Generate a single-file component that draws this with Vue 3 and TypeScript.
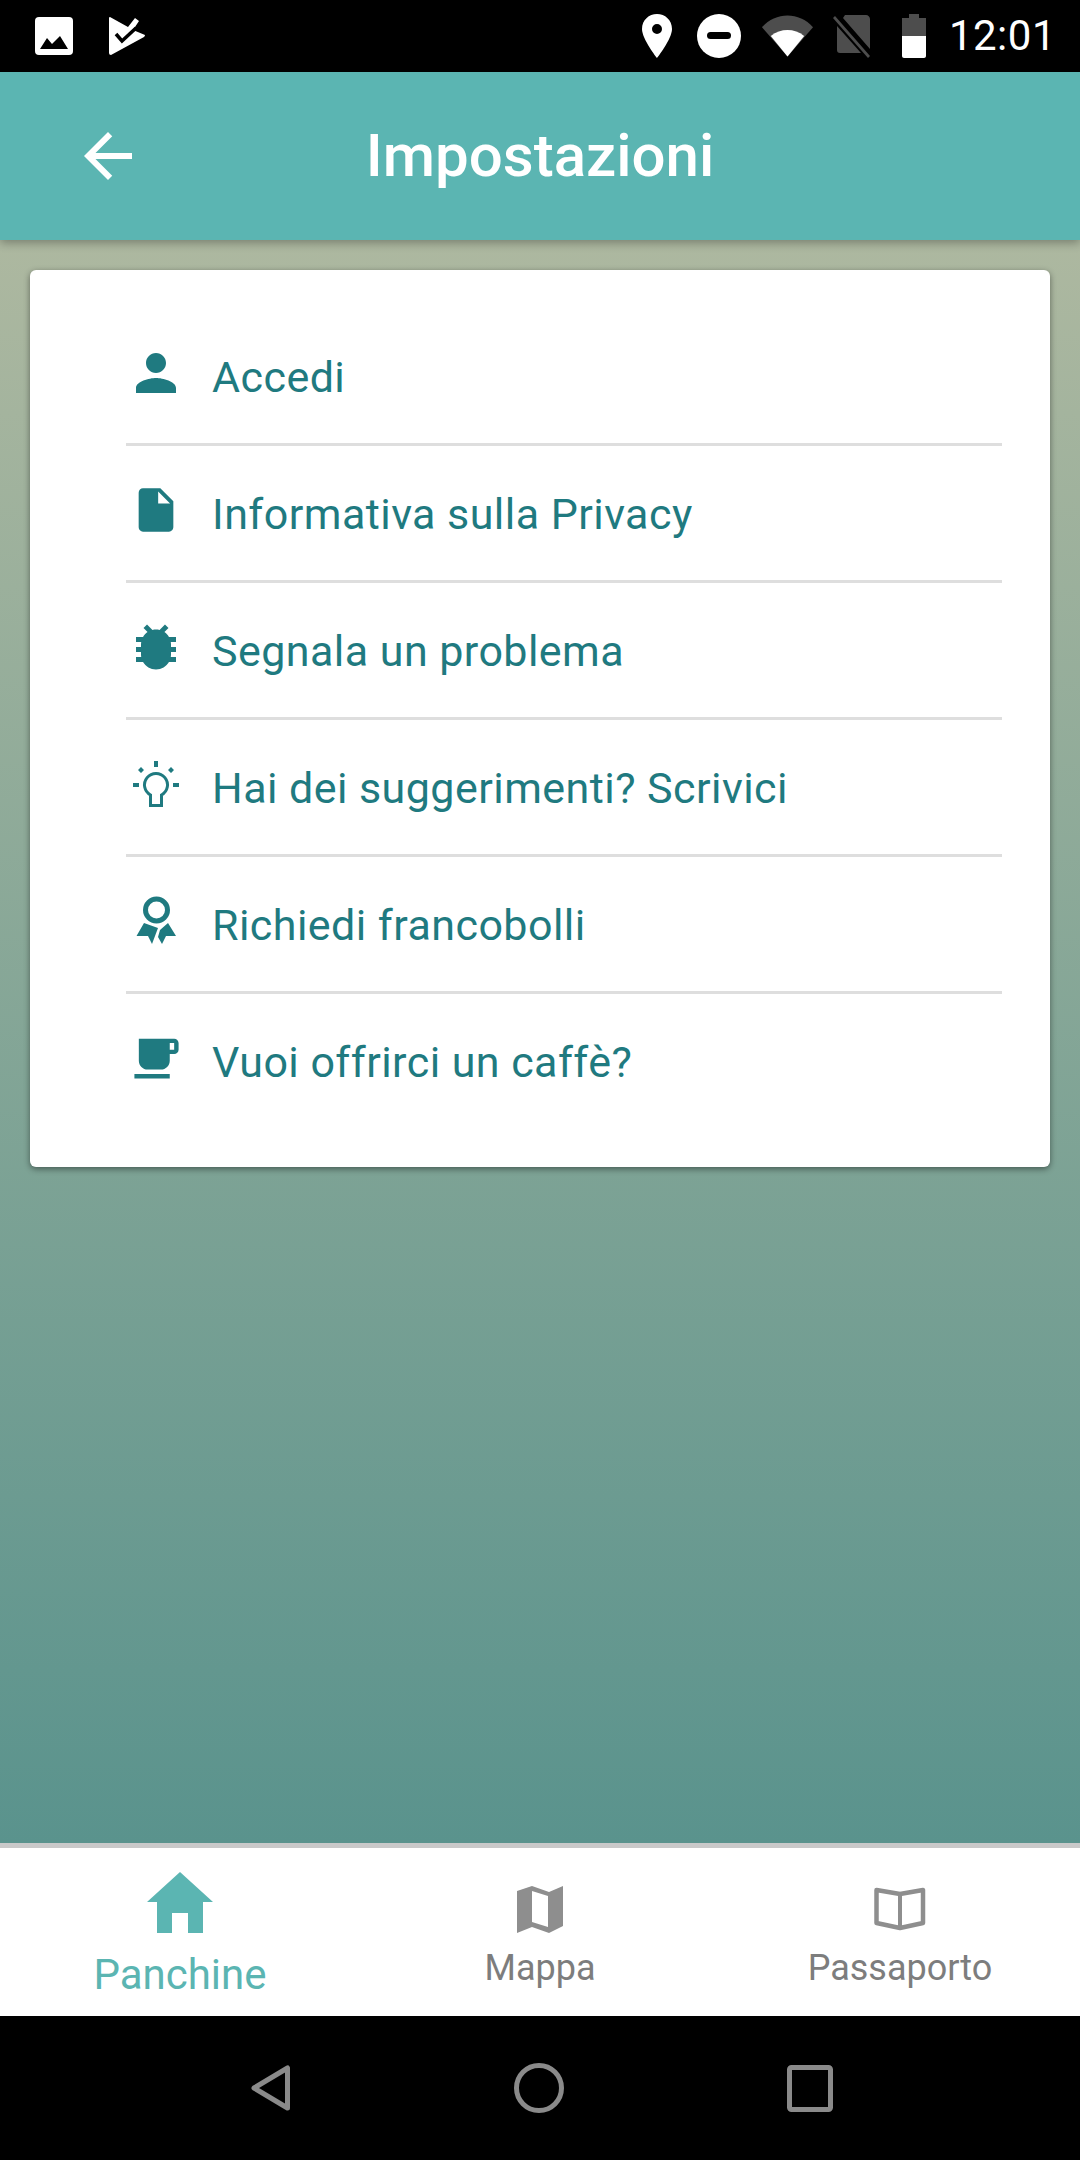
<script setup lang="ts">
interface SettingsRow {
  label: string
  icon: 'person' | 'file' | 'bug' | 'bulb' | 'medal' | 'cup'
}

const rows: SettingsRow[] = [
  { label: 'Accedi', icon: 'person' },
  { label: 'Informativa sulla Privacy', icon: 'file' },
  { label: 'Segnala un problema', icon: 'bug' },
  { label: 'Hai dei suggerimenti? Scrivici', icon: 'bulb' },
  { label: 'Richiedi francobolli', icon: 'medal' },
  { label: 'Vuoi offrirci un caffè?', icon: 'cup' }
]
</script>

<template>
  <div class="phone">
    <!-- Android status bar -->
    <div class="status">
      <div class="status__left">
        <svg width="38" height="38" viewBox="0 0 38 38">
          <rect width="38" height="38" rx="4" fill="#fff" />
          <path d="M5 32l7-11 5 6 8-8 8 13z" fill="#000" />
        </svg>
        <svg class="status__play" width="36" height="38" viewBox="0 0 36 38">
          <path d="M0 1q0-1 1-1l18 10 7-9 4 3-6 9 12 5q0 1-1 2L2 38q-2 0-2-2z" fill="#fff" />
          <path d="M7 17l6 7 14-13" fill="none" stroke="#000" stroke-width="3.5" />
        </svg>
      </div>
      <div class="status__right">
        <svg width="30" height="44" viewBox="0 0 30 44">
          <path d="M15 0C7 0 0 6 0 15c0 10 15 29 15 29s15-19 15-29C30 6 23 0 15 0zm0 20a5 5 0 1 1 0-10 5 5 0 0 1 0 10z" fill="#fff" />
        </svg>
        <svg class="status__dnd" width="44" height="44" viewBox="0 0 44 44">
          <circle cx="22" cy="22" r="22" fill="#fff" />
          <rect x="10" y="18" width="24" height="7" rx="3.5" fill="#000" />
        </svg>
        <svg class="status__wifi" width="51" height="42" viewBox="0 0 52 42">
          <path d="M0 12C14-4 38-4 52 12L26 42z" fill="#4d4d4d" />
          <path d="M9 21c10-8 24-8 34 0L26 42z" fill="#fff" />
        </svg>
        <svg class="status__sim" width="38" height="44" viewBox="0 0 38 44">
          <path d="M12 1h21c2 0 4 2 4 4v30L10 4zM4 12l24 27H7c-2 0-3-1-3-3z" fill="#4d4d4d" />
          <path d="M0 4L2 2l35 40-2 2z" fill="#4d4d4d" />
        </svg>
        <svg class="status__battery" width="24" height="44" viewBox="0 0 24 44">
          <path d="M7 0h10v4h7v18H0V4h7z" fill="#4d4d4d" />
          <path d="M0 22h24v20c0 1-1 2-2 2H2c-1 0-2-1-2-2z" fill="#fff" />
        </svg>
        <span class="status__time">12:01</span>
      </div>
    </div>

    <!-- App bar -->
    <header class="appbar">
      <svg class="appbar__back" width="72" height="72" viewBox="0 0 24 24">
        <path d="M20 11H7.83l5.59-5.59L12 4l-8 8 8 8 1.41-1.41L7.83 13H20v-2z" fill="#fff" />
      </svg>
      <h1 class="appbar__title">Impostazioni</h1>
    </header>

    <!-- Settings list -->
    <main class="body">
      <section class="card">
        <div v-for="row in rows" :key="row.label" class="row">
          <span class="row__icon">
            <svg v-if="row.icon === 'person'" width="60" height="60" viewBox="0 0 24 24">
              <path d="M12 12c2.21 0 4-1.79 4-4s-1.79-4-4-4-4 1.79-4 4 1.79 4 4 4zm0 2c-2.67 0-8 1.34-8 4v2h16v-2c0-2.66-5.33-4-8-4z" />
            </svg>
            <svg v-else-if="row.icon === 'file'" width="52" height="52" viewBox="0 0 24 24">
              <path d="M6 2c-1.1 0-2 .9-2 2v16c0 1.1.9 2 2 2h12c1.1 0 2-.9 2-2V8l-6-6H6zm7 7V3.5L18.5 9H13z" />
            </svg>
            <svg v-else-if="row.icon === 'bug'" width="60" height="60" viewBox="0 0 24 24">
              <path d="M20 8h-2.81c-.45-.78-1.07-1.45-1.82-1.96L17 4.41 15.59 3l-2.17 2.17C12.96 5.06 12.49 5 12 5c-.49 0-.96.06-1.41.17L8.41 3 7 4.41l1.62 1.63C7.88 6.55 7.26 7.22 6.81 8H4v2h2.09c-.05.33-.09.66-.09 1v1H4v2h2v1c0 .34.04.67.09 1H4v2h2.81c1.04 1.79 2.97 3 5.19 3s4.15-1.21 5.19-3H20v-2h-2.09c.05-.33.09-.66.09-1v-1h2v-2h-2v-1c0-.34-.04-.67-.09-1H20V8z" />
            </svg>
            <svg v-else-if="row.icon === 'bulb'" width="60" height="60" viewBox="0 0 60 60">
              <path d="M24.5 41A11.5 11.5 0 1 1 35.5 41V51.5H24.5Z" fill="none" stroke="#1f7a80" stroke-width="3" />
              <path d="M28 7h4v6h-4zM7 29h6v4H7zM47 29h6v4h-6zM15 13l3 3-3 3-3-3zM45 13l3 3-3 3-3-3z" />
            </svg>
            <svg v-else-if="row.icon === 'medal'" width="60" height="60" viewBox="0 0 60 60">
              <circle cx="30.5" cy="19" r="11" fill="none" stroke="#1f7a80" stroke-width="5" />
              <path d="M18 32l14 5-6 16-4-8H10.500zM42 32l8 13H40l-4 8-4-7 2-7z" />
            </svg>
            <svg v-else width="53" height="53" viewBox="0 0 24 24">
              <path d="M20 3H4v10c0 2.21 1.79 4 4 4h6c2.21 0 4-1.79 4-4v-3h2c1.11 0 2-.9 2-2V5c0-1.11-.89-2-2-2zm0 5h-2V5h2v3zM2 21h16v-2H2v2z" />
            </svg>
          </span>
          <span class="row__label">{{ row.label }}</span>
        </div>
      </section>
    </main>

    <!-- Bottom tabs -->
    <nav class="tabs">
      <div class="tab tab--active">
        <svg width="66" height="61" viewBox="0 0 66 61">
          <path d="M33 0l33 30H56v31H41V41H25v20H10V30H0z" fill="#5bb5b2" />
        </svg>
        <span class="tab__label">Panchine</span>
      </div>
      <div class="tab">
        <svg width="63" height="63" viewBox="0 0 63 63">
          <path d="M8 13l15-5 17 6 14-6v40l-14 7-17-6-15 6zM23 13v31l16 5V18z" fill="#8e8e8e" fill-rule="evenodd" />
        </svg>
        <span class="tab__label">Mappa</span>
      </div>
      <div class="tab">
        <svg width="63" height="63" viewBox="0 0 63 63">
          <path d="M7.500 12L31 16l23-4v33l-23 5-23.500-5z" fill="none" stroke="#8e8e8e" stroke-width="4.500" stroke-linejoin="round" />
          <path d="M31 16v34" stroke="#8e8e8e" stroke-width="4" />
        </svg>
        <span class="tab__label">Passaporto</span>
      </div>
    </nav>

    <!-- Android navigation bar -->
    <div class="sysnav">
      <svg width="40" height="46" viewBox="0 0 40 46">
        <path d="M36.500 3v40L3 23z" fill="none" stroke="#8a8a8a" stroke-width="5" stroke-linejoin="round" />
      </svg>
      <svg width="50" height="50" viewBox="0 0 50 50">
        <circle cx="25" cy="25" r="22.500" fill="none" stroke="#8a8a8a" stroke-width="5" />
      </svg>
      <svg width="46" height="47" viewBox="0 0 46 47">
        <rect x="2.500" y="2.500" width="41" height="42" rx="2" fill="none" stroke="#8a8a8a" stroke-width="5" />
      </svg>
    </div>
  </div>
</template>

<style>
html,
body {
  margin: 0;
  background: #000;
}
</style>

<style scoped>
.phone {
  display: flex;
  flex-direction: column;
  width: 1080px;
  height: 2160px;
  overflow: hidden;
  font-family: Roboto, 'Liberation Sans', sans-serif;
}

.status {
  display: flex;
  flex: none;
  align-items: center;
  justify-content: space-between;
  height: 72px;
  padding: 0 24px 0 35px;
  background: #000;
  box-sizing: border-box;
}
.status__left,
.status__right {
  display: flex;
  align-items: center;
}
.status__play {
  margin-left: 36px;
}
.status__dnd {
  margin-left: 25px;
}
.status__wifi {
  margin-left: 21px;
}
.status__sim {
  margin-left: 20px;
}
.status__battery {
  margin-left: 31px;
}
.status__time {
  margin-left: 23px;
  color: #fff;
  font-size: 42px;
  line-height: 44px;
  letter-spacing: 0.5px;
}

.appbar {
  position: relative;
  z-index: 1;
  display: flex;
  flex: none;
  align-items: center;
  justify-content: center;
  height: 168px;
  background: #5bb5b2;
  box-shadow: 0 3px 9px rgba(0, 0, 0, 0.3);
}
.appbar__back {
  position: absolute;
  top: 48px;
  left: 72px;
}
.appbar__title {
  margin: 0;
  color: #fff;
  font-size: 60px;
  font-weight: 500;
  line-height: 1;
}

.body {
  flex: 1;
  padding: 30px 30px 0;
  background: linear-gradient(180deg, #adb8a0 0%, #5a938d 100%);
}

.card {
  padding: 39px 48px 36px 96px;
  background: #fff;
  border-radius: 6px;
  box-shadow: 0 2px 6px rgba(0, 0, 0, 0.45);
}
.row {
  display: flex;
  align-items: center;
  gap: 26px;
  height: 134px;
  border-bottom: 3px solid #dedede;
  color: #1f7a80;
}
.row:last-child {
  border-bottom-color: transparent;
}
.row__icon {
  display: flex;
  flex: none;
  align-items: center;
  justify-content: center;
  width: 60px;
  margin-bottom: 6px;
}
.row__icon svg {
  fill: #1f7a80;
}
.row__label {
  margin-top: 2px;
  font-size: 43px;
  line-height: 1;
  letter-spacing: 0.45px;
}

.tabs {
  display: grid;
  flex: none;
  grid-template-columns: repeat(3, 1fr);
  height: 168px;
  background: #fff;
  border-top: 5px solid #c9c9c9;
}
.tab {
  display: flex;
  flex-direction: column;
  align-items: center;
  justify-content: flex-start;
  padding-top: 30px;
  color: #7d7d7d;
}
.tab__label {
  margin-top: 4px;
  font-size: 36px;
  line-height: 46px;
}
.tab--active {
  padding-top: 24px;
  color: #5bb5b2;
}
.tab--active .tab__label {
  margin-top: 17px;
  font-size: 42px;
  line-height: 50px;
}

.sysnav {
  display: flex;
  flex: none;
  align-items: center;
  justify-content: center;
  gap: 223px;
  height: 144px;
  padding-left: 4px;
  background: #000;
}
</style>
